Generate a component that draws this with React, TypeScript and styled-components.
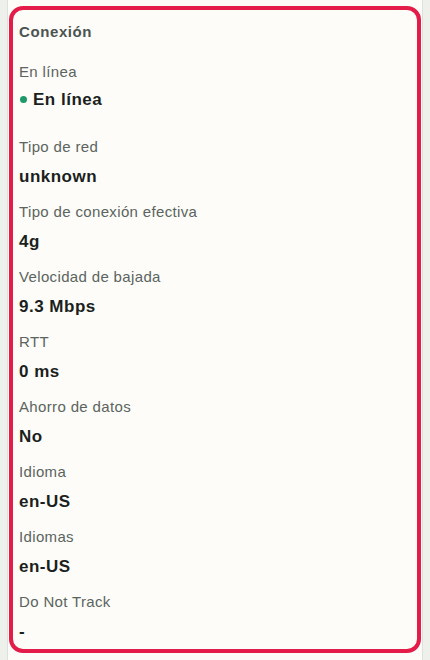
import React from "react"
import styled, { createGlobalStyle } from "styled-components"

const GlobalStyle = createGlobalStyle`
  html, body {
    margin: 0;
    padding: 0;
    background: #eef0ec;
  }
  body {
    font-family: "Liberation Sans", Arial, sans-serif;
  }
`

type Field = {
  label: string
  value: string
  online?: boolean
}

const fields: Field[] = [
  { label: "En línea", value: "En línea", online: true },
  { label: "Tipo de red", value: "unknown" },
  { label: "Tipo de conexión efectiva", value: "4g" },
  { label: "Velocidad de bajada", value: "9.3 Mbps" },
  { label: "RTT", value: "0 ms" },
  { label: "Ahorro de datos", value: "No" },
  { label: "Idioma", value: "en-US" },
  { label: "Idiomas", value: "en-US" },
  { label: "Do Not Track", value: "-" },
]

export default function App() {
  return (
    <>
      <GlobalStyle />
      <Column>
        <Card>
          <Title>Conexión</Title>
          {fields.map((f) => (
            <FieldBlock key={f.label} wide={!!f.online}>
              <Label>{f.label}</Label>
              <Value tight={!!f.online}>
                {f.online ? <Dot /> : null}
                {f.value}
              </Value>
            </FieldBlock>
          ))}
        </Card>
      </Column>
    </>
  )
}

const Column = styled.div`
  margin: 0 7px;
  min-height: 660px;
  box-sizing: border-box;
  background: #fdfcf8;
  border-left: 1px solid #dde1dc;
  border-right: 1px solid #dde1dc;
  padding: 6px 1px 8px;
`

const Card = styled.section`
  border: 4px solid #e31c4a;
  border-radius: 14px;
  background: #fdfcf8;
  padding: 12px 6px 7px;
  display: flex;
  flex-direction: column;
`

const Title = styled.h2`
  margin: 0 0 20px;
  font-size: 15px;
  line-height: 20px;
  font-weight: 700;
  color: #4b5450;
  letter-spacing: 0.6px;
`

const FieldBlock = styled.div<{ wide: boolean }>`
  display: flex;
  flex-direction: column;
  margin-bottom: ${({ wide }) => (wide ? 27 : 15)}px;

  &:last-child {
    margin-bottom: 0;
  }
`

const Label = styled.div`
  font-size: 15px;
  line-height: 20px;
  color: #5b6460;
  letter-spacing: 0.35px;
`

const Value = styled.div<{ tight: boolean }>`
  display: flex;
  align-items: center;
  gap: 6px;
  margin-top: ${({ tight }) => (tight ? 7 : 9)}px;
  font-size: 17px;
  line-height: 21px;
  font-weight: 700;
  color: #1b1f1d;
  letter-spacing: 0.5px;
`

const Dot = styled.span`
  width: 7px;
  height: 7px;
  margin-left: 1px;
  border-radius: 50%;
  background: #1e9a68;
  flex: none;
`
